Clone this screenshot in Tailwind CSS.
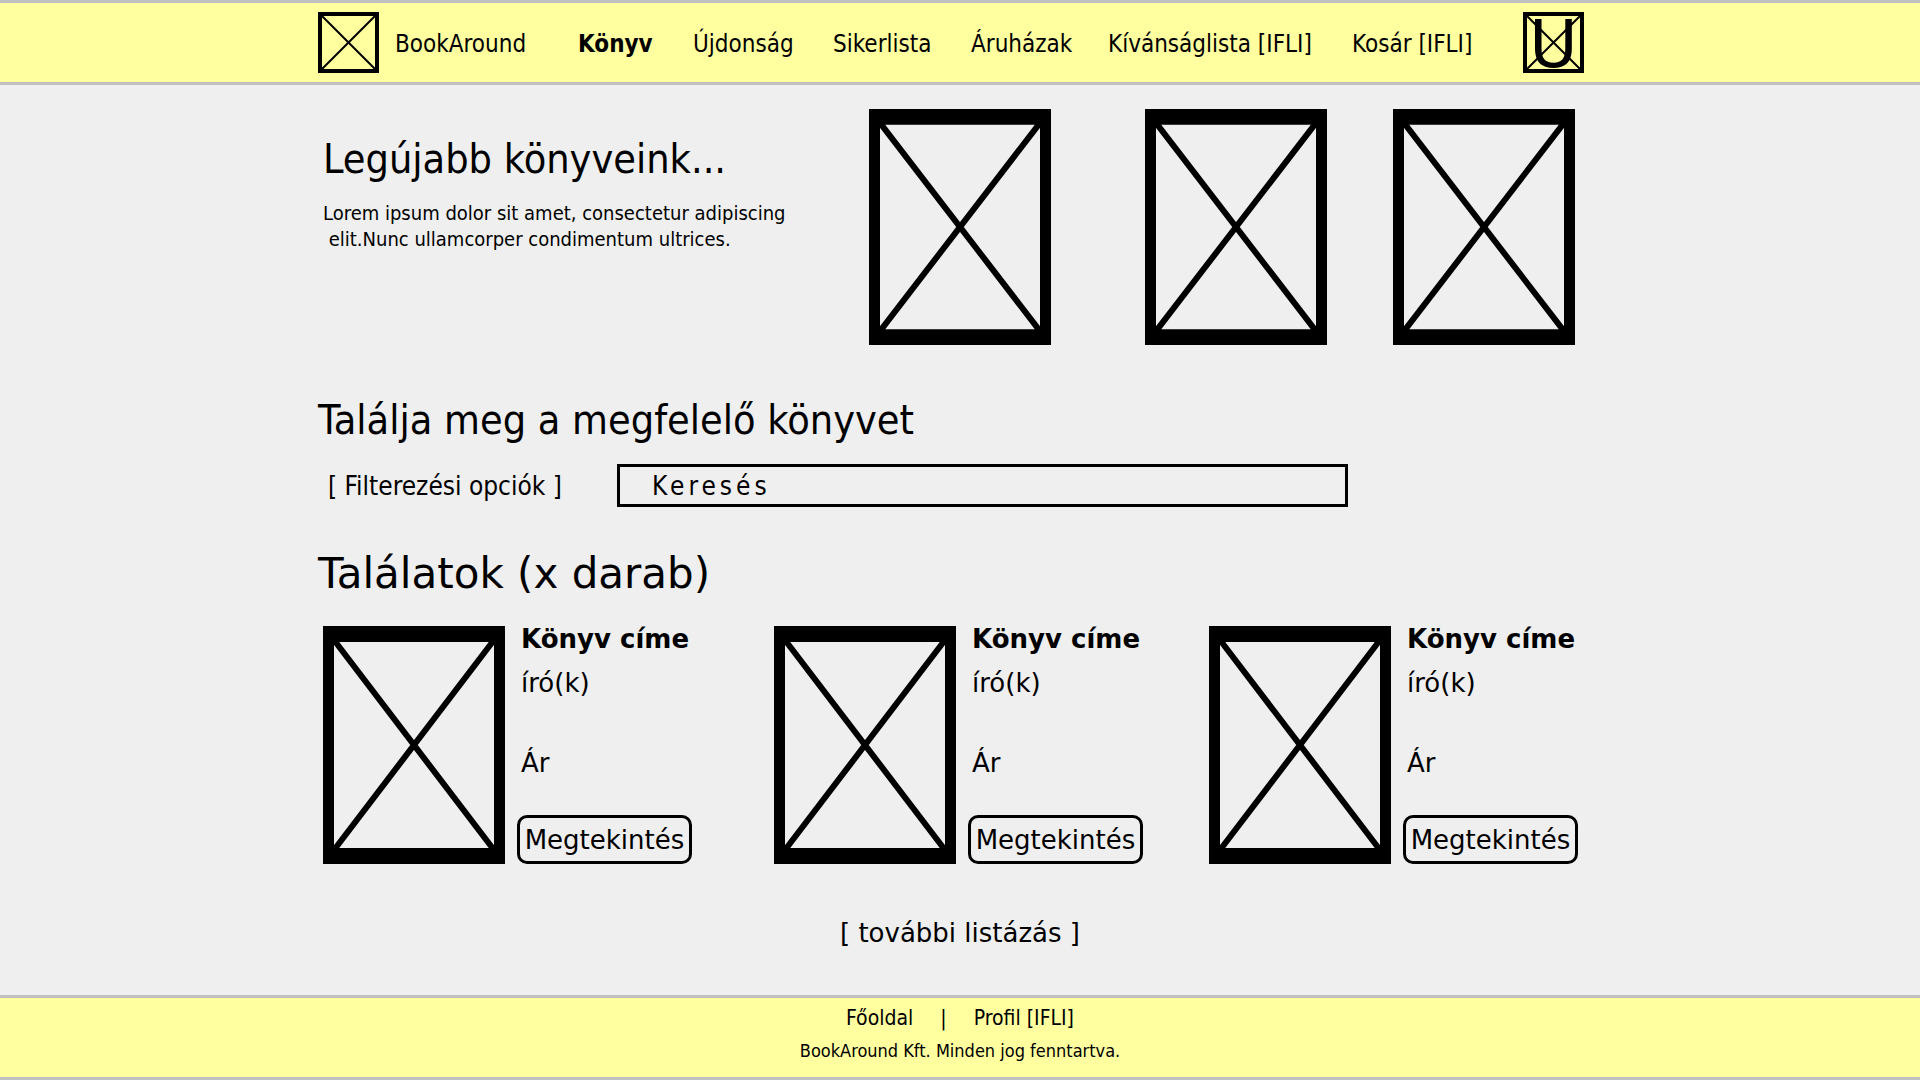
<!DOCTYPE html>
<html lang="hu">
<head>
<meta charset="utf-8">
<meta name="viewport" content="width=device-width, initial-scale=1">
<title>BookAround – Könyv</title>
<script src="https://cdn.jsdelivr.net/npm/@tailwindcss/browser@4"></script>
</head>
<body class="flex min-h-screen flex-col bg-[#efefef] font-['DejaVu_Sans_Condensed','DejaVu_Sans',sans-serif] text-black">

<!-- Shared crossed-box placeholders for covers and the logo -->
<svg class="hidden" aria-hidden="true">
  <symbol id="cover" viewBox="0 0 182 238" preserveAspectRatio="none">
    <path d="M0 0H182V238H0ZM11 16V222H171V16Z" fill="#000" fill-rule="evenodd"/>
    <path d="M11 14L171 224M171 14L11 224" stroke="#000" stroke-width="6" fill="none"/>
  </symbol>
  <symbol id="logo" viewBox="0 0 61 61">
    <path d="M2 2H59V59H2Z" stroke="#000" stroke-width="4" fill="none"/>
    <path d="M3 3L58 58M58 3L3 58" stroke="#000" stroke-width="2" fill="none"/>
  </symbol>
</svg>

<header class="border-y-3 border-[#c0c0c0] bg-[#ffffa0]">
  <div class="mx-auto flex h-[79px] max-w-[1284px] items-center pr-[18px]">
    <a href="#" class="flex w-[260px] items-center gap-4 text-[24px] leading-8">
      <svg class="size-[61px]" aria-hidden="true"><use href="#logo"/></svg>
      <span class="pt-0.5">BookAround</span>
    </a>
    <nav class="grid flex-1 grid-cols-[115px_140px_138px_137px_244px_auto] pt-0.5 text-[24px] leading-8 whitespace-nowrap" aria-label="Főmenü">
      <a href="#" class="font-bold" aria-current="page">Könyv</a>
      <a href="#">Újdonság</a>
      <a href="#">Sikerlista</a>
      <a href="#">Áruházak</a>
      <a href="#">Kívánságlista [IFLI]</a>
      <a href="#">Kosár [IFLI]</a>
    </nav>
    <a href="#" class="relative block" aria-label="Profil">
      <svg class="size-[61px]" aria-hidden="true"><use href="#logo"/></svg>
      <span class="absolute inset-0 flex items-center justify-center pt-1 font-['DejaVu_Sans',sans-serif] text-[66px] leading-none">U</span>
    </a>
  </div>
</header>

<main class="mx-auto w-full max-w-[1284px] flex-1 text-[26px] leading-8">
  <section class="flex items-start pt-6 pr-[27px] pl-[5px]">
    <div class="flex-1 pt-6">
      <h1 class="text-[41px] leading-[52px]">Legújabb könyveink...</h1>
      <p class="mt-[15px] text-[20px] leading-[26px] whitespace-pre">Lorem ipsum dolor sit amet, consectetur adipiscing
 elit.Nunc ullamcorper condimentum ultrices.</p>
    </div>
    <div class="flex">
      <svg class="mr-[94px] h-[236px] w-[182px]" role="img" aria-label="Könyvborító"><use href="#cover"/></svg>
      <svg class="mr-[66px] h-[236px] w-[182px]" role="img" aria-label="Könyvborító"><use href="#cover"/></svg>
      <svg class="h-[236px] w-[182px]" role="img" aria-label="Könyvborító"><use href="#cover"/></svg>
    </div>
  </section>

  <section class="pt-[49px]">
    <h2 class="text-[41px] leading-[52px]">Találja meg a megfelelő könyvet</h2>
    <form class="mt-[18px] flex items-center pl-[10px]">
      <button type="button" class="w-[289px] text-left">[ Filterezési opciók ]</button>
      <input type="search" aria-label="Keresés" placeholder="Keresés" class="h-[43px] w-full max-w-[731px] border-3 border-black px-8 tracking-[4px] placeholder:text-black placeholder:opacity-100">
    </form>
  </section>

  <section class="pt-[41px] font-['DejaVu_Sans',sans-serif]">
    <h2 class="text-[42px] leading-[52px]">Találatok (x darab)</h2>
    <div class="mt-[26px] flex justify-between pr-6 pl-[5px]">
      <article class="flex gap-3">
        <svg class="h-[238px] w-[182px]" role="img" aria-label="Könyvborító"><use href="#cover"/></svg>
        <div class="flex w-[175px] flex-col">
          <h3 class="-mt-[3px] px-1 font-bold whitespace-nowrap">Könyv címe</h3>
          <p class="mt-3 px-1">író(k)</p>
          <p class="mt-12 px-1">Ár</p>
          <button class="mt-auto h-[49px] rounded-[10px] border-3 border-black whitespace-nowrap">Megtekintés</button>
        </div>
      </article>
      <article class="ml-4 flex gap-3">
        <svg class="h-[238px] w-[182px]" role="img" aria-label="Könyvborító"><use href="#cover"/></svg>
        <div class="flex w-[175px] flex-col">
          <h3 class="-mt-[3px] px-1 font-bold whitespace-nowrap">Könyv címe</h3>
          <p class="mt-3 px-1">író(k)</p>
          <p class="mt-12 px-1">Ár</p>
          <button class="mt-auto h-[49px] rounded-[10px] border-3 border-black whitespace-nowrap">Megtekintés</button>
        </div>
      </article>
      <article class="flex gap-3">
        <svg class="h-[238px] w-[182px]" role="img" aria-label="Könyvborító"><use href="#cover"/></svg>
        <div class="flex w-[175px] flex-col">
          <h3 class="-mt-[3px] px-1 font-bold whitespace-nowrap">Könyv címe</h3>
          <p class="mt-3 px-1">író(k)</p>
          <p class="mt-12 px-1">Ár</p>
          <button class="mt-auto h-[49px] rounded-[10px] border-3 border-black whitespace-nowrap">Megtekintés</button>
        </div>
      </article>
    </div>
    <div class="mt-[53px] text-center">
      <button type="button">[ további listázás ]</button>
    </div>
  </section>
</main>

<footer class="h-[85px] border-y-3 border-[#c0c0c0] bg-[#ffffa0] pt-[7px] text-center">
  <nav class="flex justify-center gap-[27px] text-[21px] leading-[26px]" aria-label="Lábléc">
    <a href="#">Főoldal</a>
    <span>|</span>
    <a href="#">Profil [IFLI]</a>
  </nav>
  <p class="mt-2 text-[18px] leading-6">BookAround Kft. Minden jog fenntartva.</p>
</footer>
</body>
</html>
